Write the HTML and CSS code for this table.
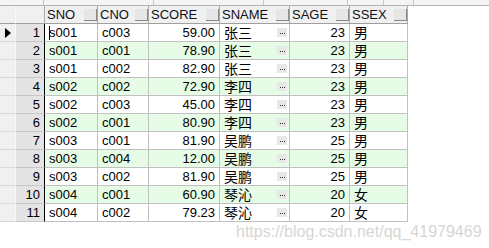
FILE: index.html
```html
<!DOCTYPE html>
<html>
<head>
<meta charset="utf-8">
<link rel="stylesheet" href="styles.css">
</head>
<body>
<div class="page">
  <div class="strip">
    <span class="strip-text">₩₩</span>
    <span class="sline" style="left:43px"></span>
    <span class="sline" style="left:153px"></span>
    <span class="sline" style="left:263px"></span>
    <span class="sline" style="left:347px"></span>
    <span class="sline" style="left:383px"></span>
    <span class="sline" style="left:413px"></span>
  </div>
  <div class="grid">
    <div class="row head">
      <div class="c ind"></div>
      <div class="c num"></div>
      <div class="c h">SNO<span class="hb"></span></div>
      <div class="c h">CNO<span class="hb"></span></div>
      <div class="c h">SCORE<span class="hb"></span></div>
      <div class="c h">SNAME<span class="hb"></span></div>
      <div class="c h">SAGE<span class="hb"></span></div>
      <div class="c h">SSEX<span class="hb"></span></div>
    </div>
    <div class="row">
      <div class="c ind"><span class="arrow"></span></div>
      <div class="c num">1</div>
      <div class="c t"><span class="caret"></span>s001</div>
      <div class="c t">c003</div>
      <div class="c r">59.00</div>
      <div class="c t cjk">张三<span class="dots"><i></i><i></i><i></i></span></div>
      <div class="c r">23</div>
      <div class="c t cjk">男</div>
    </div>
    <div class="row g">
      <div class="c ind"></div>
      <div class="c num">2</div>
      <div class="c t">s001</div>
      <div class="c t">c001</div>
      <div class="c r">78.90</div>
      <div class="c t cjk">张三<span class="dots"><i></i><i></i><i></i></span></div>
      <div class="c r">23</div>
      <div class="c t cjk">男</div>
    </div>
    <div class="row">
      <div class="c ind"></div>
      <div class="c num">3</div>
      <div class="c t">s001</div>
      <div class="c t">c002</div>
      <div class="c r">82.90</div>
      <div class="c t cjk">张三<span class="dots"><i></i><i></i><i></i></span></div>
      <div class="c r">23</div>
      <div class="c t cjk">男</div>
    </div>
    <div class="row g">
      <div class="c ind"></div>
      <div class="c num">4</div>
      <div class="c t">s002</div>
      <div class="c t">c002</div>
      <div class="c r">72.90</div>
      <div class="c t cjk">李四<span class="dots"><i></i><i></i><i></i></span></div>
      <div class="c r">23</div>
      <div class="c t cjk">男</div>
    </div>
    <div class="row">
      <div class="c ind"></div>
      <div class="c num">5</div>
      <div class="c t">s002</div>
      <div class="c t">c003</div>
      <div class="c r">45.00</div>
      <div class="c t cjk">李四<span class="dots"><i></i><i></i><i></i></span></div>
      <div class="c r">23</div>
      <div class="c t cjk">男</div>
    </div>
    <div class="row g">
      <div class="c ind"></div>
      <div class="c num">6</div>
      <div class="c t">s002</div>
      <div class="c t">c001</div>
      <div class="c r">80.90</div>
      <div class="c t cjk">李四<span class="dots"><i></i><i></i><i></i></span></div>
      <div class="c r">23</div>
      <div class="c t cjk">男</div>
    </div>
    <div class="row">
      <div class="c ind"></div>
      <div class="c num">7</div>
      <div class="c t">s003</div>
      <div class="c t">c001</div>
      <div class="c r">81.90</div>
      <div class="c t cjk">吴鹏<span class="dots"><i></i><i></i><i></i></span></div>
      <div class="c r">25</div>
      <div class="c t cjk">男</div>
    </div>
    <div class="row g">
      <div class="c ind"></div>
      <div class="c num">8</div>
      <div class="c t">s003</div>
      <div class="c t">c004</div>
      <div class="c r">12.00</div>
      <div class="c t cjk">吴鹏<span class="dots"><i></i><i></i><i></i></span></div>
      <div class="c r">25</div>
      <div class="c t cjk">男</div>
    </div>
    <div class="row">
      <div class="c ind"></div>
      <div class="c num">9</div>
      <div class="c t">s003</div>
      <div class="c t">c002</div>
      <div class="c r">81.90</div>
      <div class="c t cjk">吴鹏<span class="dots"><i></i><i></i><i></i></span></div>
      <div class="c r">25</div>
      <div class="c t cjk">男</div>
    </div>
    <div class="row g">
      <div class="c ind"></div>
      <div class="c num">10</div>
      <div class="c t">s004</div>
      <div class="c t">c001</div>
      <div class="c r">60.90</div>
      <div class="c t cjk">琴沁<span class="dots"><i></i><i></i><i></i></span></div>
      <div class="c r">20</div>
      <div class="c t cjk">女</div>
    </div>
    <div class="row">
      <div class="c ind"></div>
      <div class="c num">11</div>
      <div class="c t">s004</div>
      <div class="c t">c002</div>
      <div class="c r">79.23</div>
      <div class="c t cjk">琴沁<span class="dots"><i></i><i></i><i></i></span></div>
      <div class="c r">20</div>
      <div class="c t cjk">女</div>
    </div>
  </div>
  <div class="wm">https://blog.csdn.net/qq_41979469</div>
</div>
</body>
</html>
```
FILE: styles.css
```css
html, body {
  margin: 0;
  padding: 0;
  background: #fff;
}
.page {
  position: relative;
  width: 489px;
  height: 248px;
  overflow: hidden;
  font-family: "Liberation Sans", Arial, "Noto Sans CJK SC", sans-serif;
  font-size: 13px;
  color: #000;
}
.strip {
  position: relative;
  height: 5px;
  border-bottom: 1px solid #b4b4b4;
  background: #f4f4f4;
  overflow: hidden;
}
.strip-text {
  position: absolute;
  left: 5px;
  top: -10px;
  color: #2040d0;
  font-size: 12px;
  line-height: 12px;
}
.sline {
  position: absolute;
  top: 0;
  width: 1px;
  height: 5px;
  background: #c8c8c8;
}
.grid {
  width: 407px;
}
.row {
  display: grid;
  grid-template-columns: 15px 30px 53px 51px 71px 70px 60px 58px;
  height: 18px;
  background: #fff;
}
.row.g {
  background: #e6fce6;
}
.c {
  box-sizing: border-box;
  position: relative;
  height: 18px;
  line-height: 17px;
  border-right: 1px solid #c0c0c0;
  border-bottom: 1px solid #c0c0c0;
  white-space: nowrap;
  overflow: hidden;
}
.ind {
  background: #f0f0f0;
  border-right: none;
  border-bottom-color: #d8d8d8;
}
.num {
  background: #e4e4e4;
  border-left: 1px solid #f8f8f8;
  border-right: 1px solid #000;
  border-bottom-color: #c8c8c8;
  text-align: right;
  padding-right: 4px;
}
.t {
  padding-left: 4px;
}
.r {
  text-align: right;
  padding-right: 4px;
}
.cjk {
  font-family: "Noto Sans CJK SC", sans-serif;
  font-size: 14px;
  letter-spacing: 0;
}
.head .c {
  background: #f0f0f0;
  border-bottom: 1px solid #a0a0a0;
}
.head .ind {
  background: #f0f0f0;
}
.head .num {
  background: #f0f0f0;
  border-right: 1px solid #a8a8a8;
}
.head .h {
  padding-left: 2px;
  color: #101020;
  border-right: 1px solid #a8a8a8;
}
.hb {
  position: absolute;
  right: 0;
  top: 3px;
  width: 13px;
  height: 12px;
  box-sizing: border-box;
  background: #e6e6e6;
  border-right: 1px solid #888;
  border-bottom: 1px solid #888;
}
.arrow {
  position: absolute;
  left: 5px;
  top: 4px;
  width: 0;
  height: 0;
  border-top: 5px solid transparent;
  border-bottom: 5px solid transparent;
  border-left: 6px solid #000;
}
.caret {
  position: absolute;
  left: 4px;
  top: 2px;
  width: 1px;
  height: 14px;
  background: #000;
}
.dots {
  position: absolute;
  right: 2px;
  top: 4px;
  width: 10px;
  height: 9px;
  background: #e8e8e8;
  display: flex;
  align-items: flex-end;
  justify-content: center;
  gap: 1px;
  padding-bottom: 3px;
  box-sizing: border-box;
}
.dots i {
  display: block;
  width: 1px;
  height: 1px;
  background: #333;
}
.wm {
  position: absolute;
  left: 236px;
  top: 223px;
  font-family: "Liberation Sans", Arial, sans-serif;
  font-size: 16px;
  line-height: 18px;
  color: #d6d6d6;
  white-space: nowrap;
}
```
